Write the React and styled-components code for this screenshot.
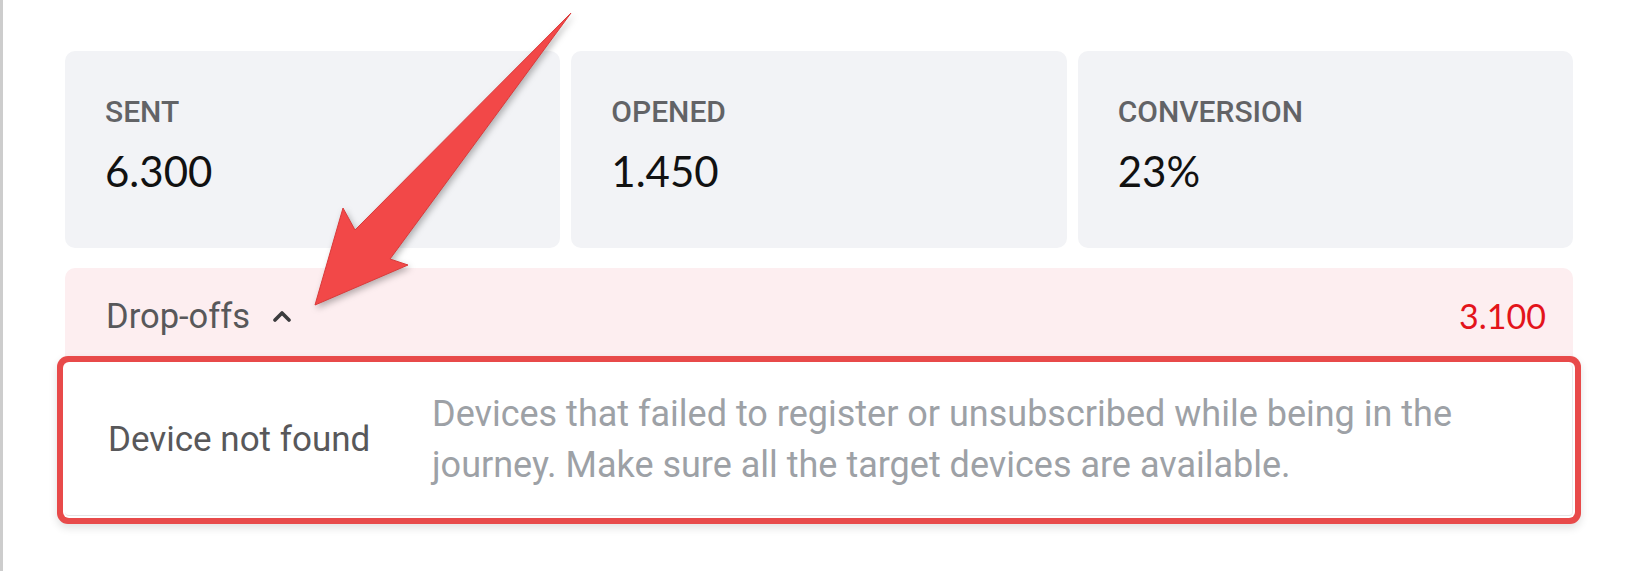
import styled, {createGlobalStyle} from 'styled-components';

/* ---------- global ---------- */
const Global = createGlobalStyle`
  html,body{margin:0;padding:0;background:#fff;}
  #root{min-height:571px;}
`;

/* ---------- styled ---------- */
const Page = styled.div`
  position:relative;box-sizing:border-box;
  min-height:571px;padding:51px 59px 0 62px;
  border-left:3px solid #cdcdcd;
  font-family:Roboto,"Liberation Sans",sans-serif;
`;
const Stats = styled.div`
  display:grid;grid-template-columns:repeat(3,1fr);gap:11px;
`;
const Card = styled.div`
  height:197px;box-sizing:border-box;padding:46px 40px 0;
  background:#f2f3f6;border-radius:10px;
`;
const Label = styled.div`
  font-size:30px;line-height:1;font-weight:500;color:#626366;
  text-transform:uppercase;
`;
const Value = styled.div`
  margin-top:23px;
  font-family:Lato,"Liberation Sans",sans-serif;
  font-size:42px;line-height:1;color:#111;
`;
const Panel = styled.section`
  margin-top:20px;border-radius:10px 10px 0 0;
  background:#fdeef0;
`;
const PanelHead = styled.div`
  height:96px;box-sizing:border-box;padding:0 27px 0 41px;
  display:flex;align-items:center;justify-content:space-between;
`;
const Toggle = styled.button`
  display:flex;align-items:center;gap:22px;padding:0;border:none;background:none;
  font-family:Roboto,"Liberation Sans",sans-serif;
  font-size:34.5px;line-height:1;color:#58585a;cursor:pointer;
`;
const Total = styled.span`
  font-family:Lato,"Liberation Sans",sans-serif;
  font-size:34px;line-height:1;color:#e3141b;
`;
const Row = styled.div`
  position:relative;display:grid;grid-template-columns:324px 1fr;align-items:center;
  height:152px;box-sizing:border-box;padding:0 40px 0 43px;
  background:#fff;border-bottom:1px solid #e4e4e6;border-right:1px solid #ececee;
  border-radius:4px;
  /* annotation frame */
  box-shadow:0 0 0 2px #fff,0 0 0 8px #e84a4a,0 4px 8px 8px rgba(0,0,0,.12);
`;
const Reason = styled.div`
  font-size:35px;line-height:1;color:#58585a;
`;
const Hint = styled.div`
  max-width:1060px;font-size:36px;line-height:51px;color:#9da1a6;
`;
const Pointer = styled.svg`
  position:absolute;left:0;top:0;pointer-events:none;
  filter:drop-shadow(2px 3px 3px rgba(0,0,0,.28));
`;

const METRICS = [
  {label: 'Sent', value: '6.300'},
  {label: 'Opened', value: '1.450'},
  {label: 'Conversion', value: '23%'},
];

const Caret = () => (
    <svg width="20" height="12" viewBox="0 0 20 12">
      <path d="M3 10 L10 3 L17 10" fill="none" stroke="#3c3c3e" strokeWidth="3.6"
            strokeLinecap="round" strokeLinejoin="round"/>
    </svg>
);

/* ---------- component ---------- */
export default function App() {
  return (
      <>
        <Global/>
        <Page>
          <Stats>
            {METRICS.map(m => (
                <Card key={m.label}>
                  <Label>{m.label}</Label>
                  <Value>{m.value}</Value>
                </Card>
            ))}
          </Stats>

          <Panel>
            <PanelHead>
              <Toggle>Drop-offs <Caret/></Toggle>
              <Total>3.100</Total>
            </PanelHead>
            <Row>
              <Reason>Device not found</Reason>
              <Hint>
                Devices that failed to register or unsubscribed while being in the
                journey. Make sure all the target devices are available.
              </Hint>
            </Row>
          </Panel>

          {/* red arrow annotation */}
          <Pointer width="620" height="320" viewBox="0 0 620 320">
            <polygon
                points="568,13 387,259 405,265 312,305 340,208 352,230"
                fill="#f24848" stroke="#d93a3a" strokeWidth="1" strokeLinejoin="round"/>
          </Pointer>
        </Page>
      </>
  );
}
